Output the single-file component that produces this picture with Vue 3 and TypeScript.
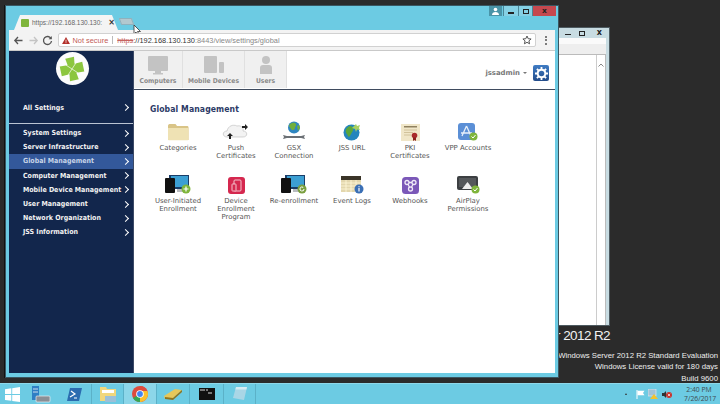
<script setup lang="ts">
const menu = ['System Settings','Server Infrastructure','Global Management','Computer Management','Mobile Device Management','User Management','Network Organization','JSS Information']
const row1 = [
  { k:'folder', t:['Categories'] },
  { k:'push', t:['Push','Certificates'] },
  { k:'gsx', t:['GSX','Connection'] },
  { k:'url', t:['JSS URL'] },
  { k:'pki', t:['PKI','Certificates'] },
  { k:'vpp', t:['VPP Accounts'] },
]
const row2 = [
  { k:'uie', t:['User-Initiated','Enrollment'] },
  { k:'dep', t:['Device','Enrollment','Program'] },
  { k:'re', t:['Re-enrollment'] },
  { k:'log', t:['Event Logs'] },
  { k:'hook', t:['Webhooks'] },
  { k:'air', t:['AirPlay','Permissions'] },
]
const rows = [row1, row2]
</script>

<template>
  <div class="desktop">
    <div class="backwin">
      <div class="backctl"><span class="bmin"></span><span class="sq"></span><span class="bx">x</span></div>
      <div class="backstrip"></div>
      <div class="backbody"><div class="backscroll"><svg width="8" height="9" viewBox="0 0 8 9"><path d="M1.500 5.500 4 3l2.500 2.500" fill="none" stroke="#888" stroke-width="1"/></svg></div></div>
    </div>

    <div class="watermark">
      <div class="wm-big">r 2012 R2</div>
      <div class="wm-l1">Windows Server 2012 R2 Standard Evaluation</div>
      <div class="wm-l2">Windows License valid for 180 days</div>
      <div class="wm-l3">Build 9600</div>
    </div>

    <div class="win">
      <div class="titlebar">
        <div class="tab">
          <span class="favicon"></span>
          <span class="tabtext">https://192.168.130.130:</span>
          <span class="tabx">×</span>
        </div>
        <div class="newtab"></div>
        <svg class="cursor" width="9" height="13" viewBox="0 0 9 13"><path d="M1 1v9l2-2 2 4 1.500-.7-2-3.800h3z" fill="#fff" stroke="#333" stroke-width=".8"/></svg>
        <div class="wincontrols">
          <div class="userbtn"><svg width="9" height="9" viewBox="0 0 9 9"><circle cx="4.500" cy="2.500" r="1.800" fill="#fff"/><path d="M1 8c0-2 1.500-3 3.500-3S8 6 8 8z" fill="#fff"/></svg></div>
          <div class="ctl"><span class="min"></span></div>
          <div class="ctl"><span class="max"></span></div>
          <div class="ctl close">x</div>
        </div>
      </div>
      <div class="chromebar">
        <svg class="nav" width="11" height="11" viewBox="0 0 11 11"><path d="M9.500 5.500H2M5 2 1.800 5.500 5 9" fill="none" stroke="#555" stroke-width="1.300"/></svg>
        <svg class="nav" width="11" height="11" viewBox="0 0 11 11"><path d="M1.500 5.500H9M6 2l3.200 3.500L6 9" fill="none" stroke="#c4c4c4" stroke-width="1.300"/></svg>
        <svg class="nav" width="11" height="11" viewBox="0 0 11 11"><path d="M9 3.500A4 4 0 1 0 9.500 6" fill="none" stroke="#555" stroke-width="1.300"/><path d="M9.800 1v3.200H6.600z" fill="#555"/></svg>
        <div class="omnibox">
          <svg width="8" height="7" viewBox="0 0 9 8"><path d="M4.500 0 9 8H0z" fill="#b3302a"/><path d="M4.500 3v2.500M4.500 6v1" stroke="#fff" stroke-width=".9"/></svg>
          <span class="notsecure">Not secure</span>
          <span class="pipe"></span>
          <span class="https">https</span><span class="host">://192.168.130.130</span><span class="rest">:8443/view/settings/global</span>
          <svg class="star" width="10" height="10" viewBox="0 0 10 10"><path d="m5 1 1.200 2.700 2.900.3-2.200 1.900.7 2.900L5 7.300 2.400 8.800l.7-2.900L.9 4l2.900-.3z" fill="none" stroke="#555" stroke-width="1"/></svg>
        </div>
        <div class="dots"><i></i><i></i><i></i></div>
      </div>

      <div class="page">
        <aside class="side">
          <div class="logo">
            <svg width="26" height="26" viewBox="0 0 26 26"><g transform="rotate(-12 13 13)"><path d="M8.500 1.500h9l-1 7 8 -.5v10l-8-.5 1 7h-9l1-7-8 .5V8l8 .5z" fill="#8cc63f"/><path d="M8 8 18 18M18 8 8 18" stroke="#fff" stroke-width=".7" opacity=".9"/></g></svg>
          </div>
          <div class="allsettings"><span>All Settings</span><span class="chev"></span></div>
          <ul class="menu">
            <li v-for="m in menu" :key="m" :class="{ active: m === 'Global Management' }"><span>{{ m }}</span><span class="chev"></span></li>
          </ul>
        </aside>
        <main class="main">
          <header class="topnav">
            <div class="navtab t1">
              <svg width="22" height="20" viewBox="0 0 22 20"><rect x="1" y="0" width="20" height="15" rx="1" fill="#c3c3c3"/><path d="M8 15h6v2h2v1.500H6V17h2z" fill="#c3c3c3"/></svg>
              <span>Computers</span>
            </div>
            <div class="navtab t2">
              <svg width="22" height="20" viewBox="0 0 22 20"><rect x="1" y="0" width="13" height="17" rx="1" fill="#c3c3c3"/><rect x="16" y="6" width="5" height="11" rx="1" fill="#c3c3c3"/></svg>
              <span>Mobile Devices</span>
            </div>
            <div class="navtab t3">
              <svg width="14" height="20" viewBox="0 0 14 20"><circle cx="7" cy="4" r="4" fill="#c3c3c3"/><path d="M1 18v-6c0-2 1-3 3-3h6c2 0 3 1 3 3v6z" fill="#c3c3c3"/></svg>
              <span>Users</span>
            </div>
            <div class="account">
              <span class="uname">jssadmin</span><span class="caret"></span>
              <div class="gear">
                <svg width="13" height="13" viewBox="0 0 13 13"><circle cx="6.500" cy="6.500" r="3.800" fill="none" stroke="#fff" stroke-width="2"/><g stroke="#fff" stroke-width="1.800"><path d="M6.500 0v2.500M6.500 10.500V13M0 6.500h2.500M10.500 6.500H13M1.900 1.900l1.800 1.800M9.300 9.300l1.800 1.800M11.100 1.900 9.300 3.700M3.700 9.300l-1.800 1.800"/></g></svg>
              </div>
            </div>
          </header>
          <section class="content">
            <h1>Global Management</h1>
            <div v-for="(row, i) in rows" :key="i" class="grid" :class="'r' + i">
              <div v-for="it in row" :key="it.k" class="item">
                <div class="ic">
                  <svg v-if="it.k==='folder'" width="22" height="18" viewBox="0 0 22 18"><path d="M1 3c0-1 .5-2 1.500-2h6l1.500 2h10c1 0 1.500.5 1.500 1.500V17H1z" fill="#d9c487"/><path d="M1 5h20.500v11.500a.8.8 0 0 1-.8.8H1.800a.8.8 0 0 1-.8-.8z" fill="#efe2b4"/></svg>
                  <svg v-else-if="it.k==='push'" width="28" height="20" viewBox="0 0 28 20"><path d="M5 16c-5 0-5-6 0-6 1-5 6-7 10-5 4-1 7 2 6 5 5 0 5 6 0 6z" fill="#f3f3f3" stroke="#bbb" stroke-width=".6"/><path d="M20 5h3V3l3 3-3 3V7h-3z" fill="#222"/><path d="M7 18v-3H5l3-3 3 3H9v3z" fill="#222"/></svg>
                  <svg v-else-if="it.k==='gsx'" width="24" height="20" viewBox="0 0 24 20"><circle cx="12" cy="6.500" r="6" fill="#2e86c1"/><path d="M8 3c2-1.500 5-2 6 0s-1 2-1 4-3 3-4 1-3-3-1-5z" fill="#6fae3d"/><path d="M15 5l2-1 1 3-2 3z" fill="#6fae3d"/><path d="M1 14c2 0 2 1 4 1h14c2 0 2-1 4-1l-1 2 1 2c-2 0-2-1-4-1H5c-2 0-2 1-4 1l1-2z" fill="#6b7075"/></svg>
                  <svg v-else-if="it.k==='url'" width="18" height="18" viewBox="0 0 18 18"><circle cx="8.500" cy="9.500" r="8" fill="#2585bd"/><path d="M4 5c3-3 5-2 6 0s-1 4-2 6-2 4-3 2-4-5-1-8z" fill="#5aa63a"/><path d="M11 3l2-2 1 2 3-1-1 3 1 2-3-.5-1 2.500-1-3-3-1z" fill="#a8d060"/></svg>
                  <svg v-else-if="it.k==='pki'" width="19" height="17" viewBox="0 0 19 17"><rect width="19" height="17" fill="#f0e6c8"/><rect x="3" y="2" width="13" height="1.500" fill="#8f8160"/><path d="M3 6h13M3 8.500h9M3 11h7" stroke="#c9b98f" stroke-width=".8"/><circle cx="13.500" cy="11.500" r="2.800" fill="#a82a2a"/><path d="M12 13.500V17l1.500-1 1.500 1v-3.500z" fill="#8c1f1f"/></svg>
                  <svg v-else-if="it.k==='vpp'" width="20" height="18" viewBox="0 0 20 18"><rect width="17" height="17" rx="3" fill="#5b8fd6"/><path d="M8.500 3 4 13M8.500 3l4.500 10M3 10h11" stroke="#e8f0fa" stroke-width="1.300" fill="none"/><circle cx="15.500" cy="13.500" r="4" fill="#7fb53c"/><path d="m13.500 13.500 1.500 1.500 2.500-3" stroke="#fff" stroke-width="1" fill="none"/></svg>
                  <svg v-else-if="it.k==='uie' || it.k==='re'" width="26" height="19" viewBox="0 0 26 19"><rect x="4" y="0" width="20" height="14" fill="#1a3d68"/><rect x="6" y="1" width="17" height="11" fill="#3c9fd3"/><rect x="12" y="14" width="7" height="3" fill="#b9bcc0"/><rect x="0" y="3" width="10" height="15" rx="1" fill="#111"/><circle cx="21" cy="14" r="4.500" :fill="it.k==='uie' ? '#7fb53c' : '#7a9f3f'"/><path v-if="it.k==='uie'" d="M21 11.500v5M18.500 14h5" stroke="#fff" stroke-width="1.200"/><path v-else d="M23 14a2 2 0 1 1-.8-1.600" stroke="#fff" stroke-width="1" fill="none"/></svg>
                  <svg v-else-if="it.k==='dep'" width="17" height="17" viewBox="0 0 17 17"><rect width="17" height="17" rx="3" fill="#d5284f"/><rect x="6" y="3" width="7" height="11" rx="1" fill="none" stroke="#f5c4cf" stroke-width="1"/><rect x="4" y="7" width="4" height="7" rx=".6" fill="#d5284f" stroke="#f5c4cf" stroke-width="1"/></svg>
                  <svg v-else-if="it.k==='log'" width="23" height="18" viewBox="0 0 23 18"><rect width="20" height="16" fill="#e3d7ae"/><rect width="20" height="4" fill="#3a3428"/><path d="M0 7h20M0 10h20M0 13h20M5 4v12M10 4v12M15 4v12" stroke="#fff7d9" stroke-width=".8"/><circle cx="18" cy="13" r="4.500" fill="#3a6fb5"/><path d="M18 12v3.500M18 10.200v1" stroke="#fff" stroke-width="1.200"/></svg>
                  <svg v-else-if="it.k==='hook'" width="17" height="17" viewBox="0 0 17 17"><rect width="17" height="17" rx="3.500" fill="#7b58b8"/><g fill="none" stroke="#efe9f7" stroke-width="1.300"><circle cx="5" cy="5.500" r="2"/><circle cx="12" cy="5.500" r="2"/><circle cx="8.500" cy="12" r="2"/><path d="M7 5.500h3M6 7.300l1.500 3M11 7.300l-1.500 3"/></g></svg>
                  <svg v-else-if="it.k==='air'" width="23" height="18" viewBox="0 0 23 18"><rect width="21" height="14" rx="2" fill="#3c3f42"/><rect x="2" y="2" width="17" height="9" fill="#55585b"/><path d="M10.500 6 5 13h11z" fill="#eee"/><circle cx="18.500" cy="13.500" r="4" fill="#7fb53c"/><path d="m16.500 13.500 1.500 1.500 2.500-3" stroke="#fff" stroke-width="1" fill="none"/></svg>
                </div>
                <div class="lbl"><div v-for="l in it.t" :key="l">{{ l }}</div></div>
              </div>
            </div>
          </section>
        </main>
      </div>
    </div>

    <footer class="taskbar">
      <div class="tb start"><svg width="15" height="15" viewBox="0 0 15 15"><path d="M0 2.200 6.300 1.300v5.800H0zM7.200 1.200 15 0v7.100H7.200zM0 8h6.300v5.800L0 12.900zM7.200 8H15v7L7.200 13.900z" fill="#fff"/></svg></div>
      <div class="tb w1"><svg width="19" height="17" viewBox="0 0 19 17"><rect x="0" y="0" width="7" height="14" fill="#2f7fc4"/><path d="M1 3h5M1 6h5" stroke="#cde" stroke-width="1"/><rect x="4" y="10" width="14" height="6" rx="1" fill="#8a8f96" stroke="#e9eef2" stroke-width=".7"/></svg></div>
      <div class="tb w2"><svg width="15" height="13" viewBox="0 0 15 13"><path d="M3 0h12l-3 13H0z" fill="#2b6cb0"/><path d="m4 3 4 3-5 3M7 10h3" stroke="#fff" stroke-width="1.200" fill="none"/></svg></div>
      <div class="tb w3"><svg width="18" height="17" viewBox="0 0 18 17"><path d="M1 1h6l1 2h9v12H1z" fill="#f1d77c"/><rect x="3" y="4" width="12" height="3" fill="#fff"/><rect x="6" y="10" width="11" height="6" fill="#9cc0d8"/></svg></div>
      <div class="tb w4"><svg width="16" height="16" viewBox="0 0 16 16"><circle cx="8" cy="8" r="8" fill="#dd4b3e"/><path d="M8 8 1 12a8 8 0 0 0 7 4z" fill="#34a853"/><path d="M8 16a8 8 0 0 0 7.400-11H8z" fill="#fbc02d"/><path d="M8 5h7.400A8 8 0 0 0 8 0z" fill="#dd4b3e"/><circle cx="8" cy="8" r="3.800" fill="#fff"/><circle cx="8" cy="8" r="2.900" fill="#4285f4"/></svg></div>
      <div class="tb w5"><svg width="18" height="12" viewBox="0 0 18 12"><path d="M0 8 11 1l7 1-9 8-8 1z" fill="#e6c75a"/><path d="M1 9l8 1 9-8v2l-9 8-8-1z" fill="#8e7420"/></svg></div>
      <div class="tb w6"><div class="cmd"><svg width="14" height="6" viewBox="0 0 14 6"><path d="M0 1h5M6 1h2M8 4h4" stroke="#ddd" stroke-width="1"/></svg></div></div>
      <div class="tb w7"><svg width="16" height="16" viewBox="0 0 16 16"><path d="M4 1h11l-3 13-11-2z" fill="#a9d6e6"/><path d="M4 1h11l-.6 2.500H3.400z" fill="#d6ecf4"/></svg></div>
      <div class="tray">
        <span class="up"></span>
        <svg width="9" height="9" viewBox="0 0 9 9"><path d="M1 0v9" stroke="#fff" stroke-width="1"/><path d="M1.500 .8h7L7 3l1.500 2.200h-7z" fill="#fff"/></svg>
        <svg width="10" height="10" viewBox="0 0 10 10"><rect x="0" y="0" width="8" height="7" fill="#9fc3d8" stroke="#eee" stroke-width=".6"/><path d="M6 5 10 10H2z" fill="#f2c230"/></svg>
        <svg width="10" height="9" viewBox="0 0 10 9"><path d="M0 3h2l2-2v7L2 6H0z" fill="#333"/><circle cx="7" cy="5" r="3" fill="#c8322c"/><path d="m5.800 3.800 2.400 2.400m0-2.400L5.800 6.200" stroke="#fff" stroke-width=".7"/></svg>
        <div class="clock"><div>2:40 PM</div><div>7/26/2017</div></div>
      </div>
    </footer>
  </div>
</template>

<style>
html, body { margin: 0; padding: 0; background: #2b2b2b; overflow: hidden; }
</style>

<style scoped>
.desktop { position: relative; width: 720px; height: 404px; background: #2b2b2b; overflow: hidden; font-family: "DejaVu Sans", sans-serif; }

.backwin { position: absolute; left: 500px; top: 27px; width: 110px; height: 299px; background: #c8dce2; border: 1px solid #4d5a60; box-sizing: border-box; display: flex; flex-direction: column; }
.backctl { height: 10px; flex: none; display: flex; justify-content: flex-end; align-items: center; color: #222; font-size: 8px; font-weight: bold; padding-right: 2px; }
.bmin { width: 6px; height: 1.500px; background: #222; margin: 3px 8px 0 0; }
.backctl .sq { width: 6px; height: 5px; border: 1.500px solid #222; box-sizing: border-box; margin-right: 12px; }
.bx { line-height: 8px; margin-right: 5px; }
.backstrip { height: 16px; flex: none; background: linear-gradient(#fafafa 40%, #eeeeee 40%); margin: 0 3px; }
.backbody { flex: 1; background: #fff; margin: 0 3px; border: 1px solid #bbb; border-bottom: none; position: relative; }
.backscroll { position: absolute; right: 0; top: 0; bottom: 0; width: 8px; border-left: 1px solid #ccc; background: #fff; }

.watermark { position: absolute; right: 2px; top: 325.500px; text-align: right; color: #eee; font-family: "Liberation Sans", sans-serif; font-size: 7.750px; line-height: 11.500px; white-space: nowrap; }
.wm-big { font-size: 13.500px; line-height: 20px; height: 24px; margin-right: 108px; color: #f2f2f2; letter-spacing: -.6px; }

.win { position: absolute; left: 5px; top: 5px; width: 554px; height: 373px; background: #6ccbe3; border: 1px solid #3a5661; box-sizing: border-box; display: flex; flex-direction: column; padding: 0 3px 4px 3px; box-shadow: -1px 0 0 #111; }
.titlebar { height: 24px; position: relative; display: flex; align-items: flex-end; flex: none; }
.tab { width: 104px; height: 15px; margin-left: 5px; background: #f4f4f4; clip-path: polygon(0 100%, 6px 0, 98px 0, 100% 100%); display: flex; align-items: center; padding: 0 0 0 7px; box-sizing: border-box; gap: 3px; }
.favicon { width: 8px; height: 8px; background: #7fb53c; border-radius: 1px; flex: none; }
.tabtext { font-family: "Liberation Sans", sans-serif; font-size: 6.500px; color: #666; white-space: nowrap; flex: none; }
.tabx { font-size: 8px; color: #333; font-weight: bold; margin-left: 3px; }
.newtab { width: 13px; height: 7px; margin: 0 0 5px 2px; background: #b3c8cf; transform: skewX(20deg); border: 1px solid #8fb1bd; box-sizing: border-box; }
.cursor { position: absolute; left: 124px; top: 18px; }
.wincontrols { position: absolute; right: -1px; top: 0; display: flex; height: 10px; align-items: stretch; }
.userbtn { width: 13px; background: #4a94a8; display: flex; align-items: center; justify-content: center; margin-right: 1px; }
.ctl { width: 14px; background: #85d0e4; border-left: 1px solid #4b8697; display: flex; align-items: center; justify-content: center; }
.ctl:nth-child(3) { width: 13px; }
.ctl .min { width: 6px; height: 2px; background: #222; margin-top: 4px; }
.ctl .max { width: 6px; height: 5px; border: 1.500px solid #222; box-sizing: border-box; }
.ctl.close { width: 24px; background: #c5484f; color: #222; font-size: 7.500px; font-weight: bold; padding-bottom: 2px; box-sizing: border-box; }

.chromebar { height: 21px; background: #f3f3f3; display: flex; align-items: center; flex: none; padding: 0 0 0 4px; gap: 3.500px; border-bottom: 1px solid #c9c9c9; box-sizing: border-box; }
.nav { flex: none; }
.omnibox { height: 14px; width: 478px; background: #fff; border: 1px solid #d1d1d1; border-radius: 2px; margin-left: 1px; display: flex; align-items: center; box-sizing: border-box; padding-left: 3px; position: relative; font-family: "Liberation Sans", sans-serif; font-size: 7.400px; white-space: nowrap; }
.notsecure { color: #b3302a; margin-left: 3px; opacity: .8; }
.pipe { width: 1px; height: 8px; background: #bbb; margin: 0 4px; }
.https { color: #b3302a; text-decoration: line-through; opacity: .75; }
.host { color: #333; }
.rest { color: #888; }
.star { position: absolute; right: 3px; top: 1px; }
.dots { display: flex; flex-direction: column; gap: 1.500px; margin-left: 6px; }
.dots i { width: 2px; height: 2px; background: #555; border-radius: 50%; display: block; }

.page { flex: 1; display: flex; background: #fff; min-height: 0; }
.side { width: 125px; flex: none; background: #12264c; border-right: 1px solid #3c4a66; box-sizing: border-box; display: flex; flex-direction: column; }
.logo { width: 33px; height: 33px; border-radius: 50%; background: #fcfcfc; margin: 1px auto 0 auto; display: flex; align-items: center; justify-content: center; position: relative; left: 1px; flex: none; }
.allsettings, .menu li { display: flex; justify-content: space-between; align-items: center; color: #f2f2f2; font-family: "DejaVu Sans Condensed", "DejaVu Sans", sans-serif; font-size: 7px; font-weight: bold; padding: 0 3px 0 14px; white-space: nowrap; }
.allsettings { margin-top: 14px; border-bottom: 1px solid #bac3d2; height: 25px; box-sizing: border-box; padding-bottom: 7px; flex: none; }
.menu { list-style: none; margin: 2px 0 0 0; padding: 0; }
.menu li { height: 14.200px; }
.menu li.active { background: #33589a; color: #c8d4e8; }
.chev { width: 4px; height: 4px; border-top: 1.300px solid #fff; border-right: 1.300px solid #fff; transform: rotate(45deg); margin-right: 2px; flex: none; }

.main { flex: 1; min-width: 0; display: flex; flex-direction: column; }
.topnav { height: 39px; border-bottom: 1.500px solid #3f4b5e; box-sizing: border-box; display: flex; flex: none; }
.navtab { background: #f0f0f0; border-right: 1px solid #e0e0e0; display: flex; flex-direction: column; align-items: center; box-sizing: border-box; padding-top: 5px; font-family: "DejaVu Sans Condensed", "DejaVu Sans", sans-serif; font-size: 6.700px; font-weight: bold; color: #8a8a8a; gap: 1px; white-space: nowrap; height: 37px; }
.navtab span { line-height: 9px; }
.navtab svg { height: 20px; }
.t1 { width: 49px; }
.t2 { width: 62px; }
.t3 { width: 42px; }
.account { margin-left: auto; display: flex; align-items: center; padding: 7px 6px 0 0; height: 37px; box-sizing: border-box; }
.uname { font-size: 6.900px; color: #777; font-weight: bold; }
.caret { width: 0; height: 0; border-left: 2px solid transparent; border-right: 2px solid transparent; border-top: 2px solid #777; margin: 0 6px 0 3px; }
.gear { width: 16px; height: 16px; background: linear-gradient(#3f7cc4, #234c8a); border-radius: 2px; display: flex; align-items: center; justify-content: center; }

.content { flex: 1; padding: 13px 0 0 16px; }
h1 { margin: 0; font-family: "DejaVu Sans Condensed", "DejaVu Sans", sans-serif; font-size: 8.600px; font-weight: bold; color: #2c3a66; letter-spacing: .1px; line-height: 12px; height: 17px; }
.grid { display: grid; grid-template-columns: repeat(6, 58px); margin-left: -1px; }
.r0 { height: 53px; }
.item { display: flex; flex-direction: column; align-items: center; width: 58px; }
.ic { height: 21px; display: flex; align-items: flex-end; justify-content: center; }
.lbl { margin-top: 2.500px; font-size: 6.900px; color: #555; text-align: center; line-height: 8px; white-space: nowrap; }

.taskbar { position: absolute; left: 0; right: 0; bottom: 0; height: 21px; background: #6ccbe3; display: flex; align-items: center; border-top: 1px solid #8ed8ea; box-sizing: border-box; }
.tb { height: 100%; display: flex; align-items: center; justify-content: center; border-right: 1px solid #5bb1c8; box-sizing: border-box; flex: none; }
.start { width: 25px; border: none; }
.w1 { width: 33px; border: none; }
.w2 { width: 34px; }
.w3 { width: 32px; }
.w4 { width: 33px; background: #8cd6e9; }
.w5 { width: 33px; }
.w6 { width: 34px; }
.w7 { width: 32px; }
.cmd { width: 16px; height: 12px; background: #111; padding: 1px; box-sizing: border-box; display: flex; }
.tray { margin-left: auto; display: flex; align-items: center; gap: 3.500px; padding-right: 6px; }
.up { width: 0; height: 0; border-left: 1.500px solid transparent; border-right: 1.500px solid transparent; border-bottom: 2px solid #333; margin-right: 5px; }
.clock { font-family: "Open Sans", sans-serif; font-size: 6.800px; line-height: 9px; color: #3f4a50; text-align: center; margin-left: 9px; width: 30px; white-space: nowrap; }
</style>
